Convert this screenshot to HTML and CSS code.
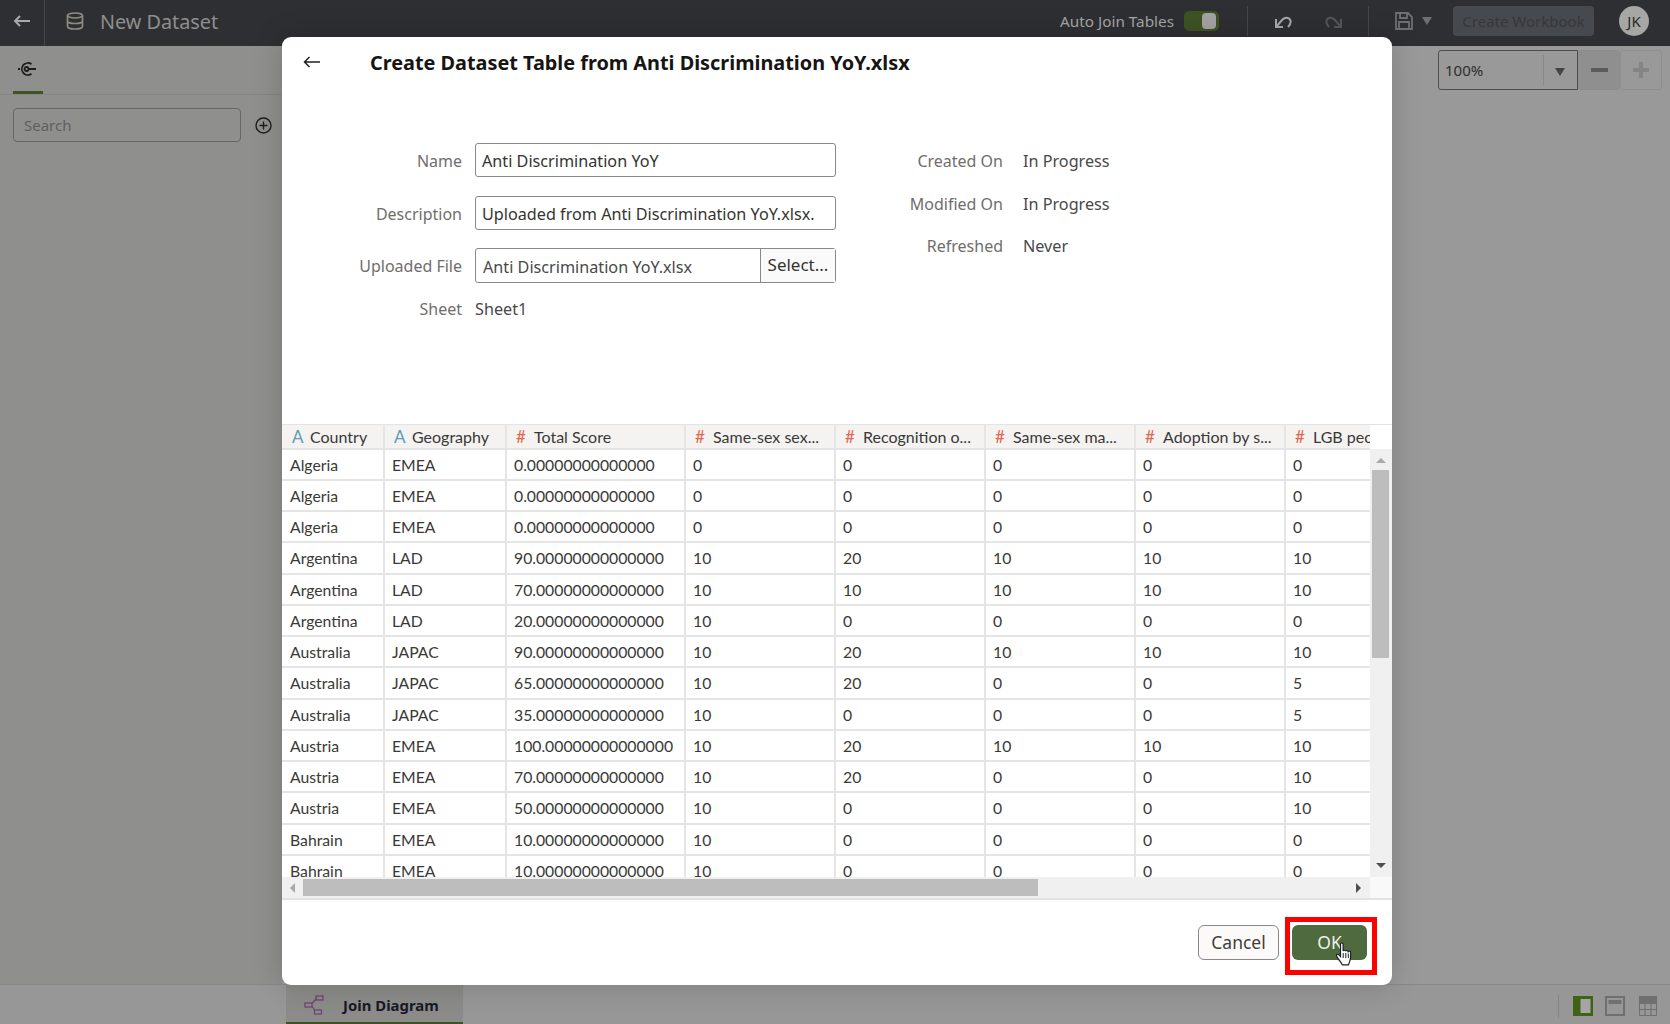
FILE: index.html
```html
<!DOCTYPE html>
<html lang="en">
<head>
<meta charset="utf-8">
<title>New Dataset</title>
<link rel="stylesheet" href="styles.css">
</head>
<body>
<div class="page">
  <header class="topbar">
    <button class="tb-back" aria-label="Back"><svg width="18" height="14" viewBox="0 0 18 14"><path d="M17 7H2M7 2 2 7l5 5" fill="none" stroke="#a9a9a9" stroke-width="2"/></svg></button>
    <svg class="tb-db" width="18" height="18" viewBox="0 0 18 18"><g fill="none" stroke="#8f8a80" stroke-width="1.7"><ellipse cx="9" cy="3.5" rx="7.5" ry="2.5"/><path d="M1.5 3.5v11c0 1.4 3.4 2.5 7.5 2.5s7.500-1.100 7.500-2.500v-11M1.500 9c0 1.400 3.400 2.500 7.500 2.500s7.500-1.100 7.500-2.500"/></g></svg>
    <span class="tb-title">New Dataset</span>
    <div class="tb-right">
      <span class="tb-auto">Auto Join Tables</span>
      <span class="toggle"><span class="knob"></span></span>
      <span class="tb-sep sep-a"></span>
      <svg class="ic-undo" width="18" height="16" viewBox="0 0 18 16"><path d="M2 6v8h7M2 14 8.500 6.500C11 4 15 4 16.300 7c1 2.500-.3 5-2.300 7" fill="none" stroke="#a8a8a8" stroke-width="2"/></svg>
      <svg class="ic-redo" width="18" height="16" viewBox="0 0 18 16"><path d="M16 6v8H9M16 14 9.500 6.500C7 4 3 4 1.700 7c-1 2.500.3 5 2.300 7" fill="none" stroke="#55565a" stroke-width="2"/></svg>
      <span class="tb-sep sep-b"></span>
      <svg class="ic-save" width="18" height="18" viewBox="0 0 18 18"><path d="M1 1h12l4 4v12H1zM5 1v5h7V1M4 17v-7h10v7" fill="none" stroke="#6e6f72" stroke-width="1.800"/></svg>
      <span class="caret-top"></span>
      <span class="create-btn">Create Workbook</span>
      <span class="avatar">JK</span>
    </div>
  </header>

  <div class="body-row">
    <aside class="side">
      <div class="side-tabs">
        <span class="side-tab"><svg width="20" height="16" viewBox="0 0 20 16"><g fill="none" stroke="#1d1d1b" stroke-width="1.800"><path d="M13.500 3.200A6 6 0 1 0 13.500 12.800"/><circle cx="8.500" cy="8" r="2"/><path d="M0 8h2M10.500 8H18"/></g></svg></span>
      </div>
      <div class="side-search">
        <span class="search-box">Search</span>
        <svg width="17" height="17" viewBox="0 0 17 17"><g fill="none" stroke="#1d1d1b" stroke-width="1.400"><circle cx="8.500" cy="8.500" r="7.500"/><path d="M8.500 4.500v8M4.500 8.500h8"/></g></svg>
      </div>
    </aside>
    <main class="canvas">
      <div class="zoom-row">
        <span class="zoom-select"><span class="zoom-val">100%</span><span class="zoom-drop"><span class="caret-zoom"></span></span></span>
        <span class="zoom-btn zoom-minus"><span class="minus-bar"></span></span>
        <span class="zoom-btn zoom-plus"><svg width="18" height="18" viewBox="0 0 18 18"><path d="M9 1v16M1 9h16" stroke="#848484" stroke-width="4"/></svg></span>
      </div>
    </main>
  </div>

  <footer class="bottombar">
    <div class="join-tab">
      <svg width="20" height="20" viewBox="0 0 20 20"><g fill="none" stroke="#70406f" stroke-width="1.200"><rect x="12" y="1" width="7" height="4"/><rect x="1" y="8" width="7" height="4"/><rect x="10.500" y="15" width="7" height="4"/><path d="M8 8.500 12 4M8 11.500l3 4"/></g></svg>
      <span>Join Diagram</span>
    </div>
    <div class="view-icons">
      <span class="view-sep"></span>
      <svg width="20" height="20" viewBox="0 0 20 20"><rect width="20" height="20" fill="#3f6214"/><rect x="7.500" y="3" width="10" height="14" fill="#a5a5a5"/></svg>
      <svg width="20" height="20" viewBox="0 0 20 20"><rect x="1" y="1" width="18" height="18" fill="none" stroke="#6f6f6f" stroke-width="2"/><rect x="3.500" y="4" width="13" height="4" fill="#707070"/></svg>
      <svg class="view-last" width="18" height="20" viewBox="0 0 18 20"><rect width="18" height="8" fill="#6f6f6f"/><path d="M.5 8v11.500h17V8M6 8v11.500M12 8v11.500M.5 13.500h17" fill="none" stroke="#6f6f6f"/></svg>
    </div>
  </footer>
</div>

<section class="modal">
  <div class="m-head">
    <svg class="m-back" width="18" height="12" viewBox="0 0 18 12"><path d="M17 6H1.500M6.500 1 1.500 6l5 5" fill="none" stroke="#222" stroke-width="1.500"/></svg>
    <h1 class="m-title">Create Dataset Table from Anti Discrimination YoY.xlsx</h1>
  </div>

  <div class="m-form">
    <div class="f-left">
      <label class="f-lab">Name</label>
      <span class="f-input">Anti Discrimination YoY</span>
      <label class="f-lab">Description</label>
      <span class="f-input">Uploaded from Anti Discrimination YoY.xlsx.</span>
      <label class="f-lab">Uploaded File</label>
      <span class="f-file"><span class="file-name">Anti Discrimination YoY.xlsx</span><span class="file-btn">Select...</span></span>
      <label class="f-lab lab-sheet">Sheet</label>
      <span class="f-val">Sheet1</span>
    </div>
    <div class="f-right">
      <span class="f-lab">Created On</span><span class="f-val">In Progress</span>
      <span class="f-lab">Modified On</span><span class="f-val">In Progress</span>
      <span class="f-lab">Refreshed</span><span class="f-val">Never</span>
    </div>
  </div>

  <div class="grid-area">
    <div class="grid-main">
      <div class="grid-clip">
        <table class="dt">
          <colgroup><col class="c1"><col class="c2"><col class="c3"><col class="c4"><col class="c4"><col class="c4"><col class="c4"><col class="c8"></colgroup>
          <thead>
            <tr>
              <th><i class="t-a">A</i>Country</th>
              <th><i class="t-a">A</i>Geography</th>
              <th><i class="t-n">#</i>Total Score</th>
              <th><i class="t-n">#</i>Same-sex sex...</th>
              <th><i class="t-n">#</i>Recognition o...</th>
              <th><i class="t-n">#</i>Same-sex ma...</th>
              <th><i class="t-n">#</i>Adoption by s...</th>
              <th><i class="t-n">#</i>LGB people</th>
            </tr>
          </thead>
          <tbody>
            <tr><td>Algeria</td><td>EMEA</td><td>0.00000000000000</td><td>0</td><td>0</td><td>0</td><td>0</td><td>0</td></tr>
            <tr><td>Algeria</td><td>EMEA</td><td>0.00000000000000</td><td>0</td><td>0</td><td>0</td><td>0</td><td>0</td></tr>
            <tr><td>Algeria</td><td>EMEA</td><td>0.00000000000000</td><td>0</td><td>0</td><td>0</td><td>0</td><td>0</td></tr>
            <tr><td>Argentina</td><td>LAD</td><td>90.00000000000000</td><td>10</td><td>20</td><td>10</td><td>10</td><td>10</td></tr>
            <tr><td>Argentina</td><td>LAD</td><td>70.00000000000000</td><td>10</td><td>10</td><td>10</td><td>10</td><td>10</td></tr>
            <tr><td>Argentina</td><td>LAD</td><td>20.00000000000000</td><td>10</td><td>0</td><td>0</td><td>0</td><td>0</td></tr>
            <tr><td>Australia</td><td>JAPAC</td><td>90.00000000000000</td><td>10</td><td>20</td><td>10</td><td>10</td><td>10</td></tr>
            <tr><td>Australia</td><td>JAPAC</td><td>65.00000000000000</td><td>10</td><td>20</td><td>0</td><td>0</td><td>5</td></tr>
            <tr><td>Australia</td><td>JAPAC</td><td>35.00000000000000</td><td>10</td><td>0</td><td>0</td><td>0</td><td>5</td></tr>
            <tr><td>Austria</td><td>EMEA</td><td>100.00000000000000</td><td>10</td><td>20</td><td>10</td><td>10</td><td>10</td></tr>
            <tr><td>Austria</td><td>EMEA</td><td>70.00000000000000</td><td>10</td><td>20</td><td>0</td><td>0</td><td>10</td></tr>
            <tr><td>Austria</td><td>EMEA</td><td>50.00000000000000</td><td>10</td><td>0</td><td>0</td><td>0</td><td>10</td></tr>
            <tr><td>Bahrain</td><td>EMEA</td><td>10.00000000000000</td><td>10</td><td>0</td><td>0</td><td>0</td><td>0</td></tr>
            <tr><td>Bahrain</td><td>EMEA</td><td>10.00000000000000</td><td>10</td><td>0</td><td>0</td><td>0</td><td>0</td></tr>
          </tbody>
        </table>
      </div>
      <div class="vscroll">
        <span class="arrow-up"></span>
        <span class="v-thumb"></span>
        <span class="arrow-down"></span>
      </div>
    </div>
    <div class="hscroll">
      <div class="h-track">
        <span class="arrow-left"></span>
        <span class="h-thumb"></span>
        <span class="arrow-right"></span>
      </div>
      <span class="h-corner"></span>
    </div>
  </div>

  <div class="m-foot">
    <span class="btn-cancel">Cancel</span>
    <span class="btn-ok">OK</span>
  </div>
</section>

<div class="red-box"></div>
<svg class="cursor" width="18" height="25" viewBox="0 0 18 25"><path d="M4.500 2.200c0-1.600 2.600-1.600 2.600 0V9c.3-1 2.400-1 2.600.2.300-1 2.300-.9 2.500.4.400-.8 2.300-.7 2.400.7.100 3.300.200 6.300-.7 8.600-.5 1.400-1 2.600-1.400 4H6.300c-.8-2-2.400-3.500-4-6C1 15-.2 13.200 1 12.400c1-.6 2.200.6 3.500 2.100z" fill="#fff" stroke="#1c1f2a" stroke-width="1.200"/><path d="M7.200 11v5M9.800 11v5M12.300 11.500V16" stroke="#1c1f2a" fill="none"/></svg>
</body>
</html>
```

FILE: styles.css
```css
* { box-sizing: border-box; }
html, body { margin: 0; height: 100%; }
body {
  width: 1670px;
  height: 1024px;
  overflow: hidden;
  position: relative;
  background: #959594;
  font-family: "Noto Sans", sans-serif;
  color: #1d1d1b;
}
.page { display: flex; flex-direction: column; height: 1024px; }

/* top bar */
.topbar {
  height: 46px;
  background: #2e2f33;
  display: flex;
  align-items: center;
  flex: none;
}
.tb-back {
  width: 45px;
  height: 46px;
  padding: 0 0 4px;
  background: none;
  border: 0;
  border-right: 1px solid #46474a;
  display: flex;
  align-items: center;
  justify-content: center;
}
.tb-db { margin: 0 0 4px 21px; }
.tb-title { margin: 0 0 4px 16px; font-size: 19.800px; color: #8e8e8c; }
.tb-right { margin-left: auto; display: flex; align-items: center; height: 46px; padding-bottom: 4px; }
.tb-auto { font-size: 15.300px; color: #a5a5a3; margin-right: 10px; }
.toggle {
  width: 35px;
  height: 20px;
  background: #3d5324;
  border-radius: 5px;
  display: flex;
  justify-content: flex-end;
  padding: 2px 3px;
}
.knob { width: 14px; height: 16px; background: #a3a3a3; border-radius: 4px; }
.tb-sep { width: 1px; height: 30px; background: #46474a; }
.sep-a { margin: 0 26px 0 28px; }
.ic-redo { margin-left: 33px; }
.sep-b { margin: 0 26px 0 25px; }
.caret-top {
  width: 0; height: 0;
  margin-left: 9px;
  border-left: 5.500px solid transparent;
  border-right: 5.500px solid transparent;
  border-top: 8px solid #6e6f72;
}
.create-btn {
  margin-left: 21px;
  width: 141px;
  height: 30px;
  background: #46494d;
  border-radius: 4px;
  color: #36383c;
  font-size: 15px;
  line-height: 30px;
  text-align: center;
  white-space: nowrap;
}
.avatar {
  margin: 0 21px 0 25px;
  width: 30px;
  height: 30px;
  border-radius: 50%;
  background: #a6a6a4;
  color: #2a2a2a;
  font-size: 15px;
  line-height: 30px;
  text-align: center;
}

/* body */
.body-row { flex: 1; display: flex; min-height: 0; }
.side { width: 282px; background: #8f8f8e; flex: none; }
.side-tabs {
  height: 49px;
  padding-left: 13px;
  border-bottom: 1px solid #858584;
}
.side-tab {
  width: 30px;
  height: 48px;
  border-bottom: 3px solid #3f5224;
  display: flex;
  align-items: center;
  justify-content: center;
}
.side-search { display: flex; align-items: center; padding: 13px 0 0 13px; gap: 14px; }
.search-box {
  width: 228px;
  height: 34px;
  border: 1px solid #666;
  border-radius: 4px;
  padding-left: 10px;
  font-size: 15px;
  line-height: 32px;
  color: #5f5f5e;
}
.canvas { flex: 1; background: #999; display: flex; flex-direction: column; }
.zoom-row { display: flex; justify-content: flex-end; padding: 4px 8px 0 0; }
.zoom-select {
  width: 140px;
  height: 40px;
  border: 1px solid #4d4d4d;
  border-radius: 3px 0 0 3px;
  display: flex;
  align-items: center;
  justify-content: space-between;
  font-size: 15px;
}
.zoom-val { padding-left: 6px; color: #2e2e2d; }
.zoom-drop {
  width: 34px;
  height: 30px;
  border-left: 1px solid #888;
  display: flex;
  align-items: center;
  justify-content: center;
  padding: 4px 2px 0 0;
}
.caret-zoom {
  width: 0; height: 0;
  border-left: 5.500px solid transparent;
  border-right: 5.500px solid transparent;
  border-top: 8px solid #444;
}
.zoom-btn {
  width: 42px;
  height: 40px;
  display: flex;
  align-items: center;
  justify-content: center;
  border: 1px solid #8e8e8e;
  border-radius: 3px;
}
.zoom-minus { background: #8f8f8f; }
.minus-bar { width: 17px; height: 4px; background: #5c5c5c; }

/* bottom bar */
.bottombar {
  height: 40px;
  background: #979797;
  border-top: 1px solid #888;
  display: flex;
  align-items: stretch;
  flex: none;
  padding-left: 286px;
}
.join-tab {
  width: 177px;
  border-bottom: 2px solid #3f5224;
  background: #8b8b8a;
  display: flex;
  align-items: center;
  gap: 19px;
  padding: 3px 0 0 18px;
  font-size: 14.900px;
  font-weight: 700;
  color: #171a24;
}
.view-icons {
  margin-left: auto;
  display: flex;
  align-items: center;
  gap: 12px;
  padding: 3px 13px 0 0;
}
.view-sep { width: 1px; height: 23px; background: #838383; margin-right: 2px; }
.view-last { margin-left: 2px; }

/* modal */
.modal {
  position: absolute;
  left: 282px;
  top: 37px;
  width: 1110px;
  height: 948px;
  background: #fff;
  border-radius: 9px;
  box-shadow: 0 0 30px rgba(0, 0, 0, .18);
  display: flex;
  flex-direction: column;
  overflow: hidden;
}
.m-head { height: 50px; display: flex; align-items: center; flex: none; }
.m-back { margin-left: 21px; }
.m-title {
  margin: 0 0 0 49px;
  font-size: 19.850px;
  font-weight: 700;
  color: #161513;
  white-space: nowrap;
}
.m-form { height: 337px; display: flex; flex: none; padding-top: 56px; }
.f-lab { color: #6f6e6c; font-size: 16px; text-align: right; white-space: nowrap; }
.f-val { color: #49484a; font-size: 16.200px; white-space: nowrap; }
.f-left {
  width: 554px;
  display: grid;
  grid-template-columns: 180px 361px;
  column-gap: 13px;
  grid-template-rows: 53px 52px 50px 22px;
  align-items: start;
  align-content: start;
}
.f-left .f-lab { line-height: 36px; }
.f-left .lab-sheet { line-height: 22px; }
.f-input, .f-file {
  height: 34px;
  border: 1px solid #8a8886;
  border-radius: 3px;
  font-size: 16.200px;
  line-height: 34px;
  color: #35342f;
  white-space: nowrap;
}
.f-input { padding-left: 6px; }
.f-file { display: flex; justify-content: space-between; height: 35px; }
.file-name { padding: 1px 0 0 7px; color: #4a4947; }
.file-btn {
  width: 75px;
  text-align: center;
  border-left: 1px solid #8a8886;
  background: #fafafa;
  font-size: 17px;
  line-height: 31px;
}
.f-right {
  width: 320px;
  display: grid;
  grid-template-columns: 167px 1fr;
  column-gap: 20px;
  grid-auto-rows: 22px;
  row-gap: 20.500px;
  align-content: start;
  padding-top: 7px;
}

/* grid */
.grid-area {
  height: 474px;
  flex: none;
  display: flex;
  flex-direction: column;
  border-top: 1px solid #e3e3e3;
}
.grid-main { flex: 1; display: flex; min-height: 0; }
.grid-clip { width: 1088px; overflow: hidden; flex: none; }
.dt {
  table-layout: fixed;
  border-collapse: collapse;
  width: 1088px;
  font-family: "Lato", sans-serif;
  font-size: 15.750px;
  color: #3a3936;
}
.c1 { width: 102px; }
.c2 { width: 122px; }
.c3 { width: 179px; }
.c4 { width: 150px; }
.c8 { width: 85px; }
.dt th {
  height: 24px;
  background: #f4f3f1;
  font-weight: 400;
  font-size: 16px;
  text-align: left;
  padding: 0 0 0 9px;
  border-right: 2px solid #e5e5e5;
  border-bottom: 2px solid #e5e5e5;
  white-space: nowrap;
  overflow: hidden;
}
.dt th:last-child, .dt td:last-child { border-right: 0; }
.dt th i { font-style: normal; display: inline-block; width: 18px; font-size: 17px; line-height: 16px; }
.dt th:first-child { padding-left: 10px; }
.t-a { color: #5d9db4; }
.t-n { color: #e2674f; }
.dt td {
  height: 31px;
  padding: 0 0 0 7px;
  border-right: 2px solid #e5e5e5;
  border-bottom: 2px solid #e5e5e5;
  white-space: nowrap;
  overflow: hidden;
}
.dt td:first-child { padding-left: 8px; }
.dt tbody tr:nth-child(4n) td { height: 32px; padding-bottom: 2px; }
.vscroll {
  flex: 1;
  margin-top: 24px;
  background: #f0f0f0;
  display: flex;
  flex-direction: column;
  align-items: center;
  padding: 9px 1px 0 0;
}
.arrow-up, .arrow-down { width: 0; height: 0; border-left: 5px solid transparent; border-right: 5px solid transparent; }
.arrow-up { border-bottom: 5px solid #a9a9a9; }
.arrow-down { border-top: 5px solid #4e4e4e; margin-top: auto; margin-bottom: 9px; }
.v-thumb { width: 17px; height: 188px; background: #bdbdbd; margin-top: 7px; }
.hscroll { height: 21px; display: flex; flex: none; }
.h-track {
  width: 1088px;
  background: #f0f0f0;
  display: flex;
  align-items: center;
  padding-left: 8px;
}
.h-thumb { width: 735px; height: 17px; background: #bdbdbd; margin-left: 8px; }
.arrow-left, .arrow-right { width: 0; height: 0; border-top: 5px solid transparent; border-bottom: 5px solid transparent; }
.arrow-left { border-right: 5px solid #a9a9a9; }
.arrow-right { border-left: 5px solid #4e4e4e; margin-left: auto; margin-right: 9px; }
.h-corner { flex: 1; background: #f9f9f9; }
.m-foot {
  flex: 1;
  border-top: 2px solid #e3e3e3;
  display: flex;
  justify-content: flex-end;
  align-items: flex-start;
  padding: 25px 25px 0 0;
  gap: 13px;
}
.btn-cancel, .btn-ok {
  height: 35px;
  border-radius: 6px;
  font-size: 17.500px;
  line-height: 33px;
  text-align: center;
}
.btn-cancel { width: 81px; background: #fbfaf8; border: 1px solid #8a8886; color: #3f3e3a; }
.btn-ok { width: 75px; background: #4f6a3e; color: #eef0ea; line-height: 35px; }

.red-box {
  position: absolute;
  left: 1285px;
  top: 917px;
  width: 92px;
  height: 58px;
  border: 5px solid #ff0000;
}
.cursor { position: absolute; left: 1336px; top: 942px; }
```
